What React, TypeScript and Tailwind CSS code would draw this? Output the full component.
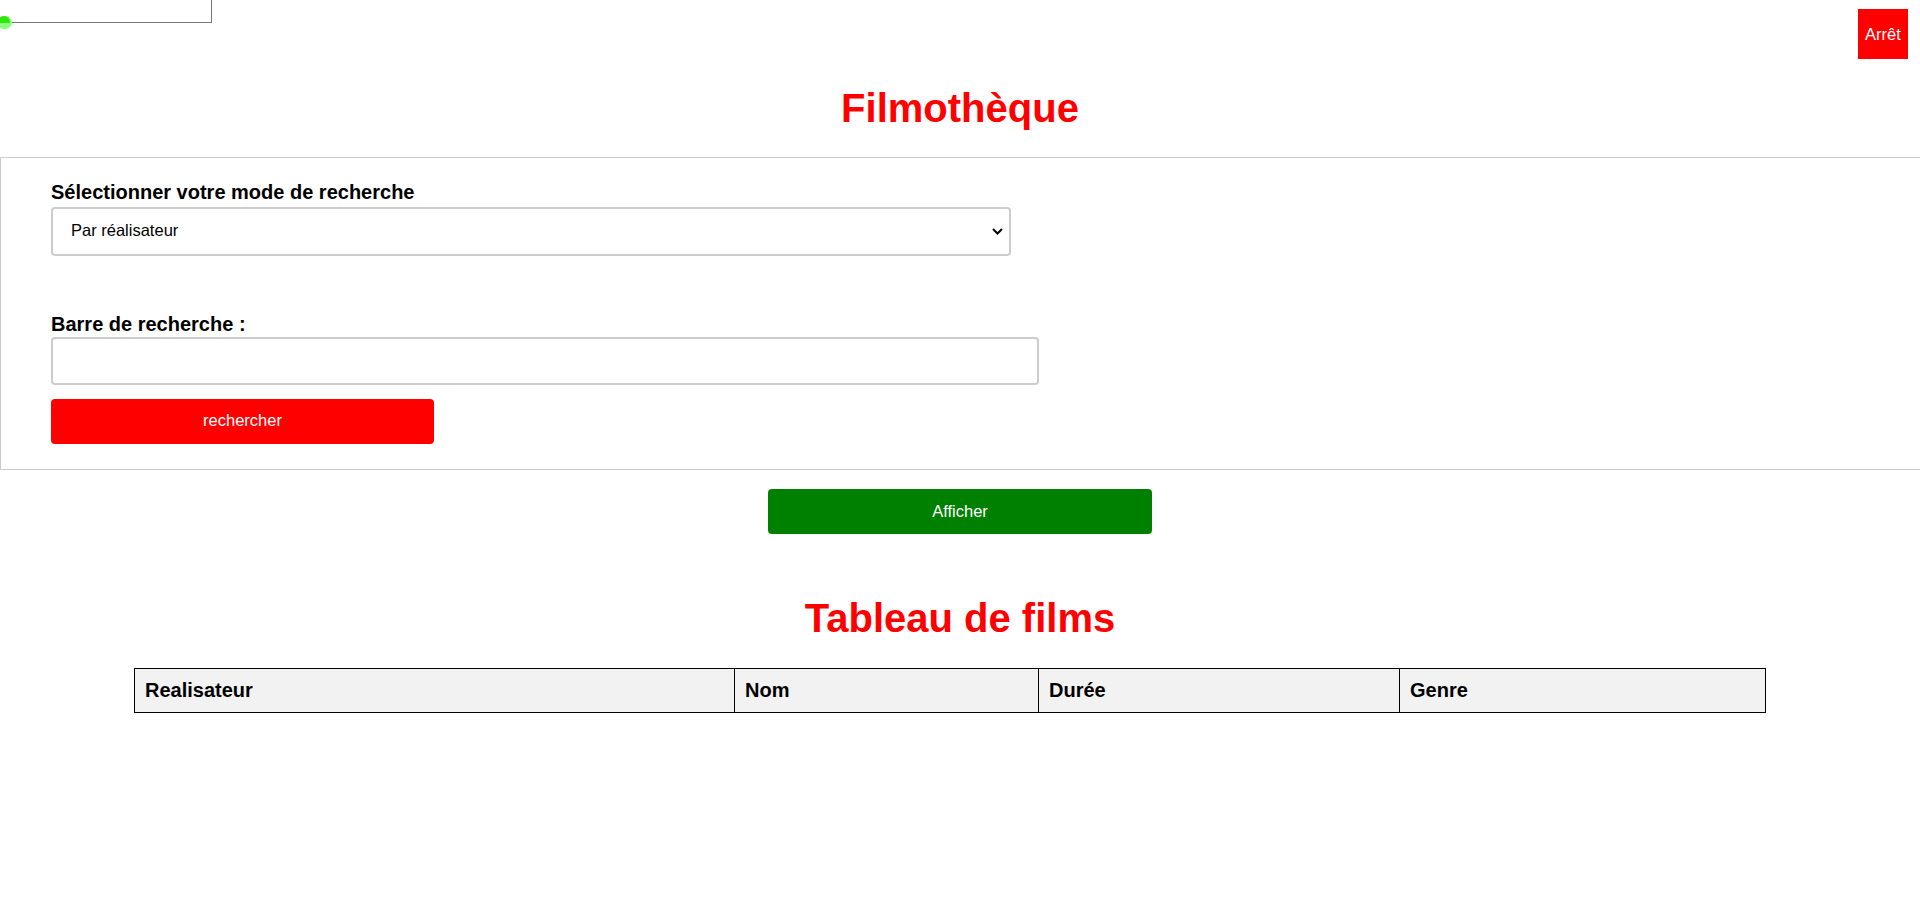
import React from 'react';

const COLUMNS = [
  { label: 'Realisateur', width: 'w-[600px]' },
  { label: 'Nom', width: 'w-[304px]' },
  { label: 'Durée', width: 'w-[361px]' },
  { label: 'Genre', width: 'w-[366px]' },
];

export default function App() {
  return (
    <div className="relative min-h-screen overflow-hidden bg-white font-['Liberation_Sans',Arial,sans-serif] text-black">
      {/* leftover box peeking from the top edge */}
      <div className="absolute left-[-1px] top-[-1px] h-[24px] w-[213px] border border-[#767676]" />
      <span className="absolute left-[-3px] top-[16px] h-[13px] w-[15px] rounded-full bg-[#8dff7e]" />
      <span className="absolute left-[-2px] top-[16px] h-[7px] w-[12px] rounded-t-full bg-[#2ee60a]" />

      <button className="absolute right-[12px] top-[9px] h-[50px] w-[50px] bg-[#ff0000] text-[16.5px] text-white">
        Arrêt
      </button>

      <h1 className="pt-[85px] mb-[26px] text-center text-[40px] font-bold leading-[46px] text-[#ff0000]">
        Filmothèque
      </h1>

      <form className="border border-r-0 border-[#cccccc] pl-[50px] pt-[23px] pb-[25px]">
        <label className="block text-[20px] font-bold leading-[23px]">
          Sélectionner votre mode de recherche
        </label>
        <div className="relative mt-[3px] w-[960px]">
          <select className="block h-[49px] w-full appearance-none rounded-[4px] border-2 border-[#cccccc] bg-white pl-[18px] pb-[2px] text-[16.5px] outline-none">
            <option>Par réalisateur</option>
            <option>Par nom</option>
            <option>Par genre</option>
          </select>
          <svg
            className="pointer-events-none absolute right-[8px] top-[21px]"
            width="11"
            height="7"
            viewBox="0 0 11 7"
          >
            <path d="M1 1l4.5 4.5L10 1" fill="none" stroke="#000" strokeWidth="2" />
          </svg>
        </div>

        <label className="mt-[57px] block text-[20px] font-bold leading-[23px]">
          Barre de recherche :
        </label>
        <input
          type="text"
          className="mt-[1px] block h-[48px] w-[988px] rounded-[4px] border-2 border-[#cccccc] px-[20px] text-[16.5px] outline-none"
        />
        <button
          type="button"
          className="mt-[14px] block h-[45px] w-[383px] rounded-[4px] bg-[#ff0000] pb-[2px] text-[16.5px] text-white"
        >
          rechercher
        </button>
      </form>

      <button className="mx-auto mt-[19px] block h-[45px] w-[384px] rounded-[4px] bg-[#008000] pb-[1px] text-[16.5px] text-white">
        Afficher
      </button>

      <h2 className="mt-[61px] text-center text-[40px] font-bold leading-[46px] text-[#ff0000]">
        Tableau de films
      </h2>

      <table className="mt-[27px] ml-[134px] w-[1632px] table-fixed border-collapse">
        <thead>
          <tr>
            {COLUMNS.map(col => (
              <th
                key={col.label}
                className={`${col.width} border border-black bg-[#f2f2f2] p-[10px] text-left text-[20px] font-bold leading-[23px]`}
              >
                {col.label}
              </th>
            ))}
          </tr>
        </thead>
        <tbody />
      </table>
    </div>
  );
}
